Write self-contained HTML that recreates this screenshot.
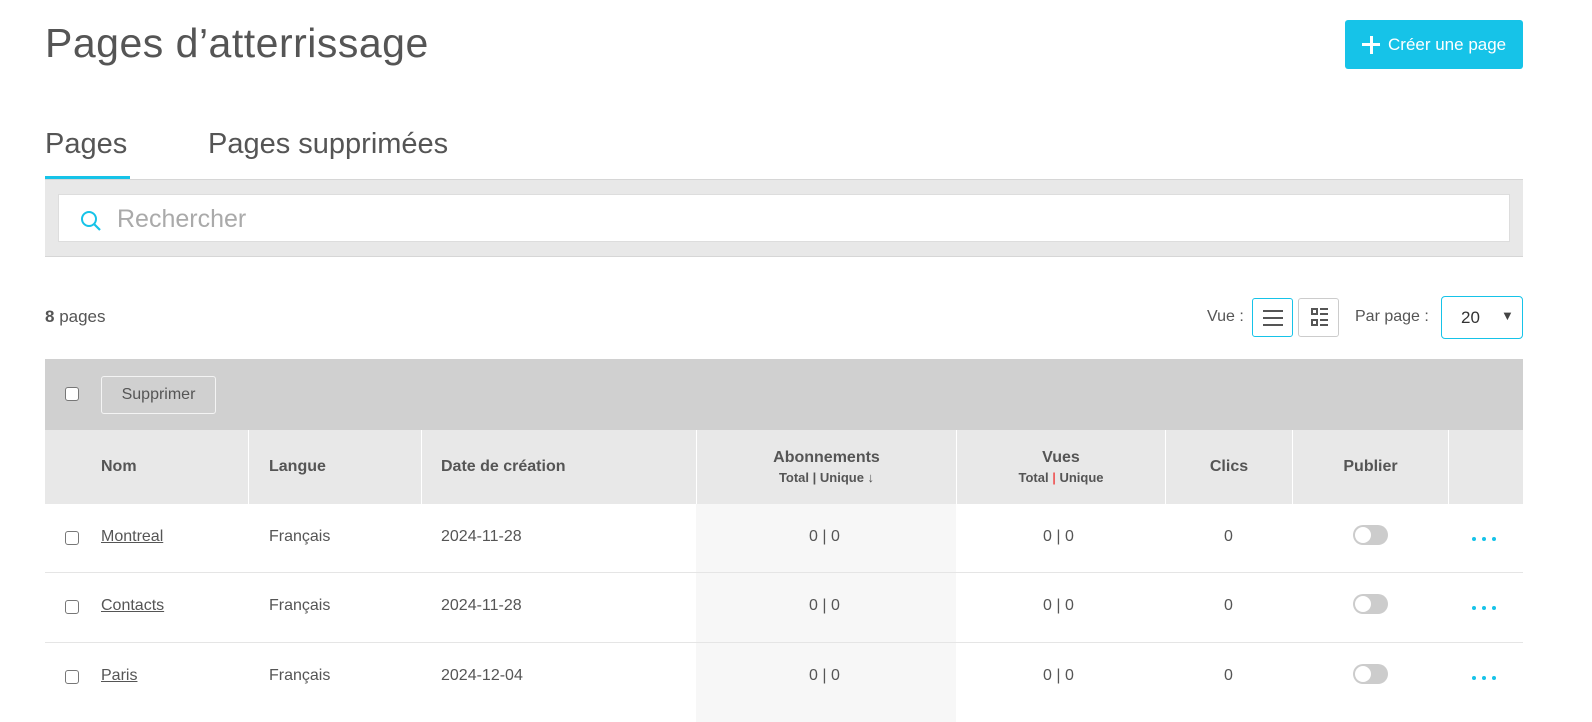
<!DOCTYPE html>
<html><head><meta charset="utf-8"><style>
*{box-sizing:border-box;margin:0;padding:0}
body{width:1592px;height:722px;overflow:hidden;background:#fff;font-family:"Liberation Sans",Arial,sans-serif;color:#555;position:relative}
.abs{position:absolute}
h1{position:absolute;left:45px;top:20px;font-size:41px;font-weight:normal;color:#555;letter-spacing:0.5px}
.btn{position:absolute;left:1345px;top:20px;width:178px;height:49px;background:#16c3e8;border-radius:3px;color:#fff;font-size:17px;line-height:49px;padding-left:43px}
.btn:before{content:"";position:absolute;left:17px;top:23px;width:18px;height:3px;background:#fff}
.btn:after{content:"";position:absolute;left:24.5px;top:15.5px;width:3px;height:18px;background:#fff}
.tab{position:absolute;top:128px;font-size:29px;color:#555}
.sbox{position:absolute;left:45px;top:179px;width:1478px;height:78px;background:#e8e8e8;border-top:1px solid #d6d6d6;border-bottom:1px solid #d6d6d6}
.sin{position:absolute;left:13px;top:14px;width:1452px;height:48px;background:#fff;border:1px solid #ddd}
.cb{position:absolute;width:14px;height:14px;border:1px solid #777;border-radius:3px;background:#fff}
.th{position:absolute;top:430px;height:74px;font-weight:bold;font-size:16px;color:#555;display:flex;align-items:center;border-right:1px solid #fff}
.td{position:absolute;font-size:16px;color:#555}
.tog{position:absolute;width:35px;height:20px;border-radius:10px;background:#ccc}
.tog:after{content:"";position:absolute;left:2px;top:2px;width:16px;height:16px;border-radius:50%;background:#fff}
.d{position:absolute;width:4px;height:4px;border-radius:50%;background:#16c3e8}
</style></head><body>
<h1>Pages d’atterrissage</h1>
<div class="btn">Créer une page</div>
<div class="tab" style="left:45px">Pages</div>
<div class="abs" style="left:45px;top:176px;width:85px;height:3px;background:#16c3e8"></div>
<div class="tab" style="left:208px">Pages supprimées</div>
<div class="sbox"><div class="sin">
<svg class="abs" style="left:20px;top:14px" width="24" height="24" viewBox="0 0 24 24"><circle cx="10" cy="10" r="7" fill="none" stroke="#16c3e8" stroke-width="2"/><line x1="15" y1="15" x2="21" y2="21" stroke="#16c3e8" stroke-width="2.2"/></svg>
<div class="abs" style="left:58px;top:10px;font-size:25px;color:#aaa">Rechercher</div></div></div>
<div class="abs" style="left:45px;top:307px;font-size:17px;color:#555"><b>8</b> pages</div>
<div class="abs" style="left:1207px;top:308px;font-size:16px">Vue :</div>
<div class="abs" style="left:1252px;top:298px;width:41px;height:39px;border:1px solid #16c3e8;border-radius:3px">
<div class="abs" style="left:10px;top:11px;width:20px;height:2px;background:#555"></div>
<div class="abs" style="left:10px;top:18px;width:20px;height:2px;background:#555"></div>
<div class="abs" style="left:10px;top:25px;width:20px;height:2px;background:#555"></div></div>
<div class="abs" style="left:1298px;top:298px;width:41px;height:39px;border:1px solid #ccc;border-radius:3px">
<div class="abs" style="left:12px;top:9px;width:7px;height:7px;border:2px solid #555"></div>
<div class="abs" style="left:12px;top:20px;width:7px;height:7px;border:2px solid #555"></div>
<div class="abs" style="left:21px;top:9px;width:8px;height:2px;background:#555"></div>
<div class="abs" style="left:21px;top:14px;width:8px;height:2px;background:#555"></div>
<div class="abs" style="left:21px;top:20px;width:8px;height:2px;background:#555"></div>
<div class="abs" style="left:21px;top:25px;width:8px;height:2px;background:#555"></div></div>
<div class="abs" style="left:1355px;top:308px;font-size:16px">Par page :</div>
<div class="abs" style="left:1441px;top:296px;width:82px;height:43px;border:1px solid #16c3e8;border-radius:4px;font-size:17px;color:#333;padding:11px 0 0 19px">20<span class="abs" style="left:59px;top:11px;font-size:13px;color:#444">▼</span></div>
<div class="abs" style="left:45px;top:359px;width:1478px;height:71px;background:#d0d0d0"></div>
<div class="cb" style="left:65px;top:387px"></div>
<div class="abs" style="left:101px;top:376px;width:115px;height:38px;border:1px solid #f4f4f4;border-radius:3px;font-size:16px;text-align:center;line-height:36px">Supprimer</div>
<div class="abs" style="left:45px;top:430px;width:1478px;height:74px;background:#e8e8e8"></div>
<div class="abs" style="left:696px;top:504px;width:260px;height:218px;background:#f7f7f7"></div>
<div class="th" style="left:45px;width:204px;padding-left:56px">Nom</div>
<div class="th" style="left:249px;width:173px;padding-left:20px">Langue</div>
<div class="th" style="left:422px;width:275px;padding-left:19px">Date de création</div>
<div class="th" style="left:697px;width:260px;justify-content:center;flex-direction:column">Abonnements<span style="font-size:13px;margin-top:3px">Total | Unique ↓</span></div>
<div class="th" style="left:957px;width:209px;justify-content:center;flex-direction:column">Vues<span style="font-size:13px;margin-top:3px">Total <span style="color:#e55">|</span> Unique</span></div>
<div class="th" style="left:1166px;width:127px;justify-content:center">Clics</div>
<div class="th" style="left:1293px;width:156px;justify-content:center">Publier</div>
<div class="th" style="left:1449px;width:74px;border:none"></div>
<div class="abs" style="left:45px;top:572px;width:1478px;height:1px;background:#e5e5e5"></div>
<div class="abs" style="left:45px;top:642px;width:1478px;height:1px;background:#e5e5e5"></div>
<!-- rows -->
<div class="cb" style="left:65px;top:531px"></div><div class="td" style="left:101px;top:528px;text-decoration:underline">Montreal</div><div class="td" style="left:269px;top:528px">Français</div><div class="td" style="left:441px;top:528px">2024-11-28</div><div class="td" style="left:809px;top:528px">0 | 0</div><div class="td" style="left:1043px;top:528px">0 | 0</div><div class="td" style="left:1224px;top:528px">0</div><div class="tog" style="left:1353px;top:525px"></div><div class="d" style="left:1472px;top:537px"></div><div class="d" style="left:1482px;top:537px"></div><div class="d" style="left:1492px;top:537px"></div>
<div class="cb" style="left:65px;top:600px"></div><div class="td" style="left:101px;top:597px;text-decoration:underline">Contacts</div><div class="td" style="left:269px;top:597px">Français</div><div class="td" style="left:441px;top:597px">2024-11-28</div><div class="td" style="left:809px;top:597px">0 | 0</div><div class="td" style="left:1043px;top:597px">0 | 0</div><div class="td" style="left:1224px;top:597px">0</div><div class="tog" style="left:1353px;top:594px"></div><div class="d" style="left:1472px;top:606px"></div><div class="d" style="left:1482px;top:606px"></div><div class="d" style="left:1492px;top:606px"></div>
<div class="cb" style="left:65px;top:670px"></div><div class="td" style="left:101px;top:667px;text-decoration:underline">Paris</div><div class="td" style="left:269px;top:667px">Français</div><div class="td" style="left:441px;top:667px">2024-12-04</div><div class="td" style="left:809px;top:667px">0 | 0</div><div class="td" style="left:1043px;top:667px">0 | 0</div><div class="td" style="left:1224px;top:667px">0</div><div class="tog" style="left:1353px;top:664px"></div><div class="d" style="left:1472px;top:676px"></div><div class="d" style="left:1482px;top:676px"></div><div class="d" style="left:1492px;top:676px"></div>
</body></html>
